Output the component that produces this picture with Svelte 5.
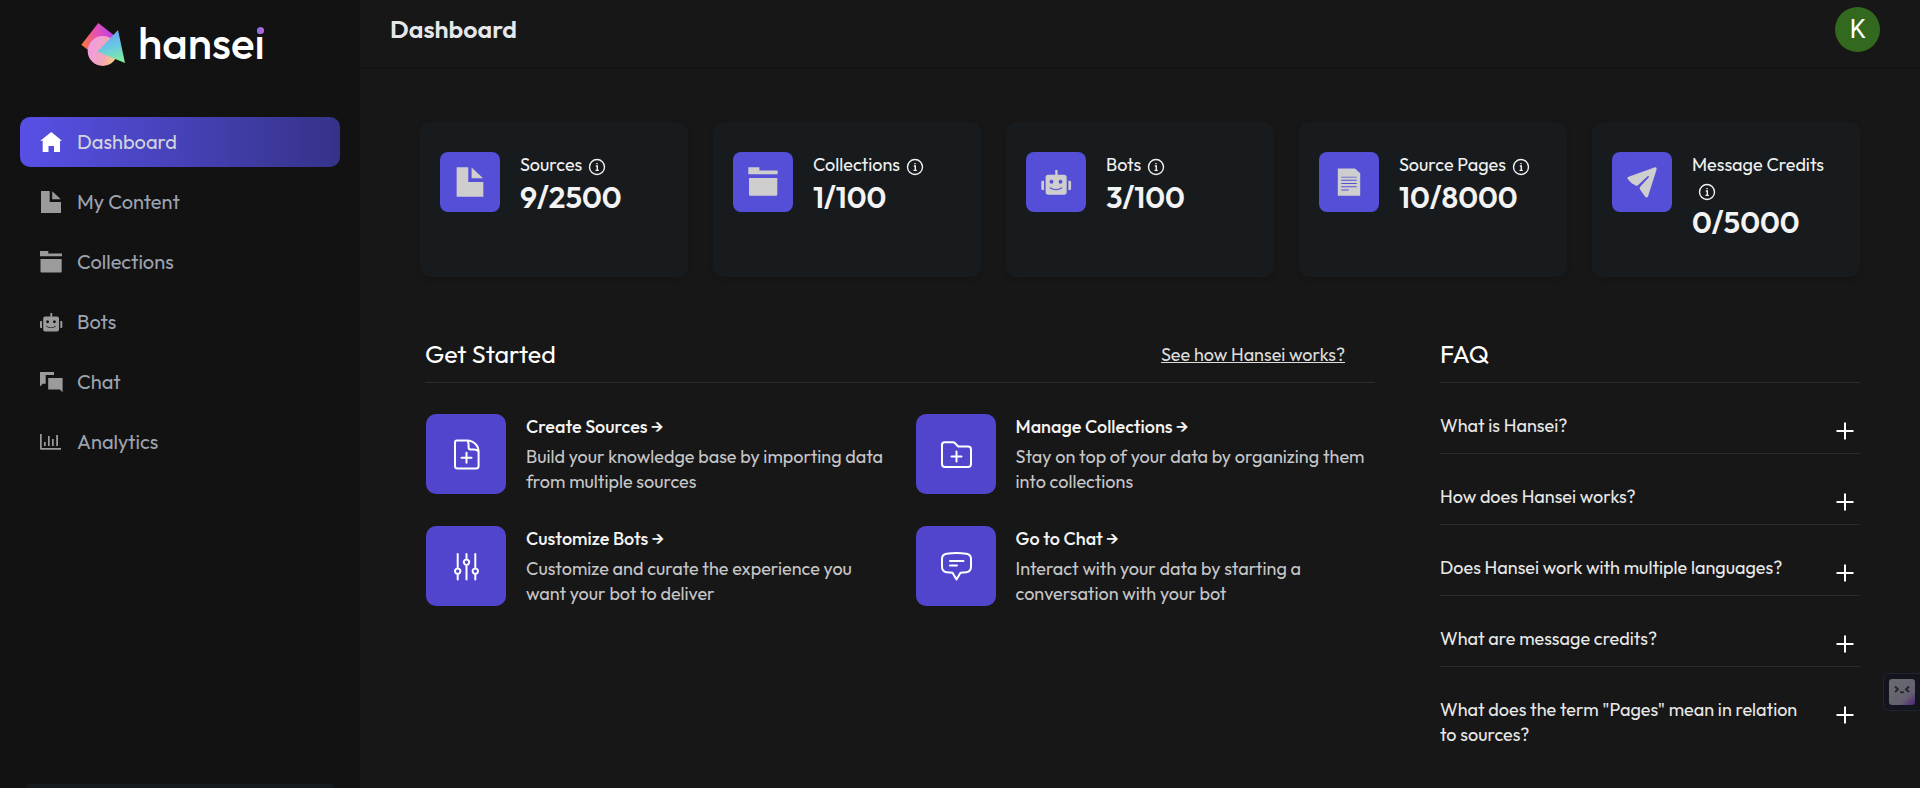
<script>
  const nav = [
    { label: 'Dashboard', icon: 'home' },
    { label: 'My Content', icon: 'file' },
    { label: 'Collections', icon: 'folder' },
    { label: 'Bots', icon: 'bot' },
    { label: 'Chat', icon: 'chat' },
    { label: 'Analytics', icon: 'chart' }
  ];
  const stats = [
    { label: 'Sources', value: '9/2500', icon: 'file' },
    { label: 'Collections', value: '1/100', icon: 'folder' },
    { label: 'Bots', value: '3/100', icon: 'bot' },
    { label: 'Source Pages', value: '10/8000', icon: 'pages' },
    { label: 'Message Credits', value: '0/5000', icon: 'plane' }
  ];
  const steps = [
    { title: 'Create Sources', text: 'Build your knowledge base by importing data from multiple sources', icon: 'addFile' },
    { title: 'Manage Collections', text: 'Stay on top of your data by organizing them into collections', icon: 'addFolder' },
    { title: 'Customize Bots', text: 'Customize and curate the experience you want your bot to deliver', icon: 'sliders' },
    { title: 'Go to Chat', text: 'Interact with your data by starting a conversation with your bot', icon: 'message' }
  ];
  const questions = [
    'What is Hansei?',
    'How does Hansei works?',
    'Does Hansei work with multiple languages?',
    'What are message credits?',
    'What does the term "Pages" mean in relation to sources?'
  ];
  // Filled glyphs on a 22 x 24 grid
  const solid = {
    home: 'M11.3 2L22 10.7H20V22H14V16H8.5V22H2.7V10.7H.3z',
    file: 'M1 1H9.7V12H21V23H1zM12.2 1.2L20.8 9.2H12.2z',
    folder: 'M0 1H8.3V3.4H22V6.2H0zM.5 9H21.7V21.2Q21.7 22.4 20.7 22.4H1.3Q.5 22.4 .5 21.2z',
    bot: 'M10.4 3h1.8v3.6H17q2 0 2 2V19.5q0 2-2 2H5.2q-2 0-2-2V8.6q0-2 2-2h5.2zM0 12q0-1 1-1h1v7H1q-1 0-1-1zM20.3 11h1q1 0 1 1v5q0 1-1 1h-1zM7.6 10.3a1.4 1.5 0 1 0 .01 0zM14.4 10.3a1.4 1.5 0 1 0 .01 0zM6.2 15.8q4.8 3.2 9.6 0l-.3 1q-4.5 2.6-9 0z',
    chat: 'M0 2H14V5H5.7V13.8H2.8L0 16.4zM8.2 8H22.6V22.2L19.8 19.6H8.2z',
    chart: 'M0 4H1.7V18H21V19.8H1Q0 19.8 0 18.8zM4 12h1.7v4H4zM8 6h1.7v10H8zM12 9h1.7v7H12zM16.2 5H18v11h-1.8z',
    pages: 'M2.6 1.8H15.5L19.4 5.4V22.4H2.6zM5.2 8V8.7H16.8V8zM5.2 10.4V11.1H16.8V10.4zM5.2 12.8V13.5H16.8V12.8zM5.2 15.2V15.9H16.8V15.2zM5.2 17.6V18.3H10.8V17.6z',
    plane: 'M20.8.9L1 8Q-.7 8.8.6 10.2Q2.6 13.2 6.2 14.6Q7.3 15 8.2 14.2L15.2 7.6Q16.6 7 16.1 8.4L9.6 15.6Q9 16.5 9.4 17.5L13.4 23.1Q14.6 24.2 15.5 22.8L22 2.4Q22.2.7 20.8.9z'
  };
  // Outlined glyphs on a 32 x 32 grid
  const outline = {
    addFile: 'M7 2.4H17C24 2.4 28.6 8 28.6 13.5V28Q28.6 30.6 26 30.6H7.600Q5 30.6 5 28V4.600Q5 2.4 7 2.4zM17 2.6Q18.600 3.200 18.600 8V9.600Q18.600 11.600 20.600 11.600H24Q27.600 11.600 28.500 14M16.500 14.800V24.800M11.500 19.800H21.500',
    addFolder: 'M4.500 4.300H13Q14.300 4.300 15.200 5.300L18.200 8.500H28Q31 8.500 31 11.500V26Q31 29 28 29H5Q2 29 2 26V7Q2 4.300 4.500 4.300zM16.500 13.600V23.600M11.500 18.600H21.500',
    sliders: 'M7.700 4V18.300M7.700 23.900V29.500M16.500 4V9.500M16.500 15V29.500M25.300 4V18.300M25.300 23.900V29.500M7.700 18.400a2.700 2.700 0 1 0 .01 0zM16.500 9.500a2.700 2.700 0 1 0 .01 0zM25.300 18.400a2.700 2.700 0 1 0 .01 0z',
    message: 'M6.500 3.800Q16.500 2.400 26.500 3.800Q31 4.600 31 9V16.500Q31 21.800 26.500 22.200L20.500 22.800L16.500 29.500L12.500 22.800L6.500 22.200Q2 21.800 2 16.500V9Q2 4.600 6.500 3.800zM10 11H23.500M10 15.500H17'
  };
  let active = $state('Dashboard');
  let opened = $state(-1);
</script>

<div class="app">
  <aside>
    <a class="logo" href="#home">
      <svg viewBox="0 0 46 46" width="46" height="46" aria-hidden="true">
        <defs>
          <linearGradient id="sq" x1="0" y1=".6" x2="1" y2=".3"><stop offset="0" stop-color="#fb7a2f" /><stop offset=".45" stop-color="#e84fb4" /><stop offset="1" stop-color="#a63cff" /></linearGradient>
          <linearGradient id="ci" x1="0" y1=".4" x2="1" y2=".7"><stop offset="0" stop-color="#f09ae6" /><stop offset=".6" stop-color="#f4a7b4" /><stop offset="1" stop-color="#f6d376" /></linearGradient>
          <linearGradient id="tr" x1=".3" y1="0" x2=".55" y2="1"><stop offset="0" stop-color="#6f9df2" /><stop offset=".5" stop-color="#68c5e6" /><stop offset="1" stop-color="#80eda0" /></linearGradient>
        </defs>
        <path d="M18.300 1L1.300 22.700L23 39.700L40 18z" fill="url(#sq)" />
        <circle cx="22.700" cy="29" r="15" fill="url(#ci)" />
        <path d="M38 8L17.500 29.700L45 41z" fill="url(#tr)" />
      </svg>
      <span class="word">hansei</span>
    </a>
    <nav>
      {#each nav as item}
        <a href="#{item.icon}" class:active={active === item.label} onclick={() => (active = item.label)}>
          <svg viewBox="0 0 22 24" width="22" height="24" overflow="visible" aria-hidden="true"><path fill-rule="evenodd" d={solid[item.icon]} /></svg>
          <span>{item.label}</span>
        </a>
      {/each}
    </nav>
    <div class="panel"></div>
  </aside>

  <main>
    <header>
      <h1>Dashboard</h1>
      <button class="avatar">K</button>
    </header>

    <div class="content">
      <section class="stats">
        {#each stats as s}
          <article>
            <div class="badge">
              <svg viewBox="0 0 22 24" width="30" height="32" overflow="visible" aria-hidden="true"><path fill-rule="evenodd" d={solid[s.icon]} /></svg>
            </div>
            <div>
              <h3>{s.label}<svg class="info" viewBox="0 0 18 18" width="18" height="18" aria-hidden="true"><circle cx="9" cy="9" r="7.500" /><path d="M7.800 8H9.300V12.300M7.500 12.400H10.800M9 5V6.300" /></svg></h3>
              <p>{s.value}</p>
            </div>
          </article>
        {/each}
      </section>

      <div class="columns">
        <section>
          <div class="head">
            <h2>Get Started</h2>
            <a href="#how">See how Hansei works?</a>
          </div>
          <div class="steps">
            {#each steps as step}
              <a class="step" href="#{step.icon}">
                <span class="tile">
                  <svg viewBox="0 0 32 32" width="32" height="32" aria-hidden="true"><path d={outline[step.icon]} /></svg>
                </span>
                <span class="copy">
                  <strong>{step.title} →</strong>
                  <span>{step.text}</span>
                </span>
              </a>
            {/each}
          </div>
        </section>

        <section class="faq">
          <div class="head"><h2>FAQ</h2></div>
          {#each questions as q, i}
            <button aria-expanded={opened === i} onclick={() => (opened = opened === i ? -1 : i)}>
              <span>{q}</span>
              <svg viewBox="0 0 18 18" width="18" height="18" aria-hidden="true"><path d="M9 .5V17.500M.5 9H17.500" /></svg>
            </button>
          {/each}
        </section>
      </div>
    </div>
  </main>

  <button class="widget" aria-label="Assistant">
    <svg viewBox="0 0 26 26" width="26" height="26" aria-hidden="true">
      <defs><linearGradient id="wg" x1=".3" y1=".2" x2="1" y2="1"><stop offset="0" stop-color="#68696f" /><stop offset=".6" stop-color="#655f70" /><stop offset="1" stop-color="#4c2475" /></linearGradient></defs>
      <rect width="26" height="26" rx="3" fill="url(#wg)" />
      <path d="M6 7.500L9 10.300L6 13M20 7.500L17 10.300L20 13M11.200 12.500Q13 14.600 14.800 12.500" fill="none" stroke="#23252c" stroke-width="1.800" />
    </svg>
  </button>
</div>

<style>
  :global(body) { background: #171717; }
  .app {
    display: flex;
    min-height: 100vh;
    font-family: Outfit, Lato, sans-serif;
    font-size: 18px;
    line-height: 25px;
    color: #f0f0f0;
  }
  h1, h2, h3, p { margin: 0; }
  a { color: inherit; text-decoration: none; }
  button { font: inherit; color: inherit; border: 0; background: none; padding: 0; cursor: pointer; }
  svg { flex: none; }

  aside {
    box-sizing: border-box;
    flex: none;
    width: 360px;
    height: 100vh;
    padding: 22px 20px 0;
    background: #121212;
    display: flex;
    flex-direction: column;
    overflow: hidden;
  }
  .logo { display: flex; gap: 12px; height: 46px; margin: 0 0 49px 60px; }
  .word {
    position: relative;
    color: #fff;
    font-size: 44px;
    line-height: 42px;
    font-weight: 500;
  }
  .word::after {
    content: '';
    position: absolute;
    top: 5px;
    right: 1px;
    width: 7px;
    height: 7px;
    border-radius: 50%;
    background: linear-gradient(90deg, #6474f0, #d95fd0);
    box-shadow: 0 0 0 2px #121212;
  }
  nav { display: flex; flex-direction: column; gap: 10px; }
  nav a {
    display: flex;
    align-items: center;
    gap: 15px;
    height: 50px;
    padding: 0 20px;
    border-radius: 10px;
    font-size: 20px;
    color: #9ca3af;
  }
  nav span { padding-bottom: 2px; }
  nav svg { fill: #9b9b9b; }
  nav .active { background: linear-gradient(90deg, #5850e6, #353388); color: #d1d5db; }
  nav .active svg { fill: #fff; }
  .panel { height: 4px; margin: auto 6px 0; border-radius: 8px 8px 0 0; background: #171a1d; }

  main { flex: 1; min-width: 0; }
  header {
    display: flex;
    align-items: center;
    justify-content: space-between;
    padding: 7px 40px 15px 30px;
    box-shadow: 0 1px 2px #111;
  }
  h1 { padding-bottom: 2px; font-size: 25px; line-height: 30px; font-weight: 600; color: #e5e7eb; }
  .avatar {
    width: 45px;
    height: 45px;
    border-radius: 50%;
    background: #33691e;
    color: #fff;
    font-family: Roboto, sans-serif;
    font-size: 25px;
  }
  .content { padding: 55px 60px 0; }

  .stats { display: grid; grid-template-columns: repeat(5, minmax(0, 1fr)); gap: 25px; }
  article {
    display: flex;
    gap: 20px;
    min-height: 105px;
    padding: 30px 20px 20px;
    border-radius: 10px;
    background: #171b1e;
    box-shadow: 0 2px 4px #151515;
  }
  .badge, .tile { flex: none; display: grid; place-items: center; }
  .badge { width: 60px; height: 60px; border-radius: 8px; background: #554fd8; }
  .badge svg { fill: #cecece; }
  h3 { font-size: 18px; line-height: 25px; font-weight: 400; }
  .info { margin-left: 6px; vertical-align: -5px; fill: none; stroke: #f0f0f0; stroke-width: 1.4; }
  article p { font-size: 30px; line-height: 40px; font-weight: 600; color: #f3f3f3; }

  .columns { display: grid; grid-template-columns: minmax(0, 950fr) minmax(0, 420fr); gap: 65px; padding: 60px 0 0 5px; }
  .head {
    display: flex;
    align-items: center;
    justify-content: space-between;
    padding: 1px 30px 12px 0;
    border-bottom: 1px solid #2b2b2b;
  }
  h2 { font-size: 25px; line-height: 32px; font-weight: 400; color: #fff; }
  .head a { text-decoration: underline; color: #dcdcdc; }
  .steps { display: grid; grid-template-columns: 1fr 1fr; gap: 32px 30px; padding: 31px 0 0 1px; }
  .step { display: flex; gap: 20px; }
  .tile { width: 80px; height: 80px; border-radius: 10px; background: #5145cd; }
  .tile svg, .faq svg { fill: none; stroke: #fff; stroke-width: 2; stroke-linecap: round; stroke-linejoin: round; }
  .copy { display: flex; flex-direction: column; gap: 5px; color: #c6c6c8; }
  .copy strong { font-weight: 500; color: #f3f3f3; }

  .faq button {
    display: flex;
    justify-content: space-between;
    align-items: flex-start;
    gap: 30px;
    width: 100%;
    padding: 30px 6px 13px 0;
    border-bottom: 1px solid #2b2b2b;
    text-align: left;
    color: #e8e8e8;
  }
  .faq button:last-child { border: 0; }
  .faq svg { margin-top: 9px; stroke-linecap: butt; }

  .widget {
    position: fixed;
    right: 0;
    top: 673px;
    display: flex;
    padding: 5px;
    border: 1px solid #20242e;
    border-right: 0;
    border-radius: 6px 0 0 6px;
    background: #12141e;
  }
</style>
